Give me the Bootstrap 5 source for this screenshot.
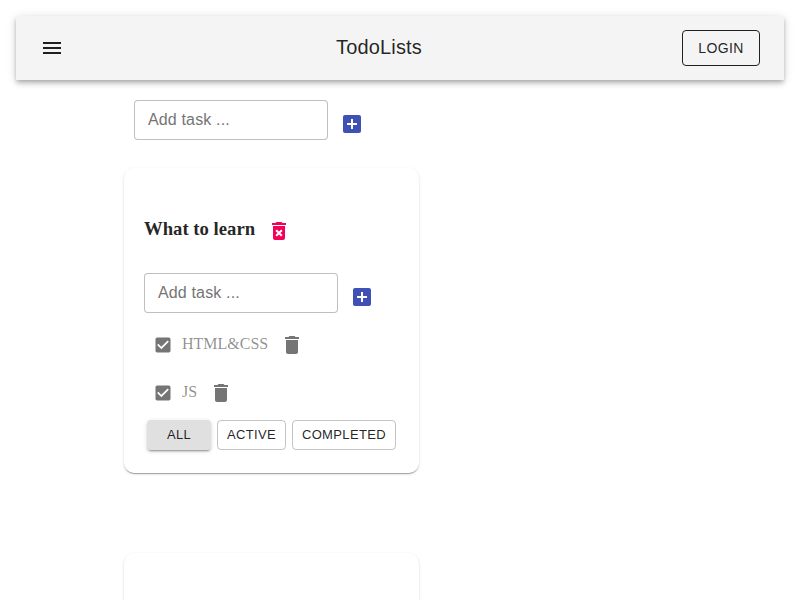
<!DOCTYPE html>
<html lang="en">
<head>
<meta charset="utf-8">
<meta name="viewport" content="width=device-width, initial-scale=1">
<title>TodoLists</title>
<link href="https://cdn.jsdelivr.net/npm/bootstrap@5.3.0/dist/css/bootstrap.min.css" rel="stylesheet">
<style>
body { font-family: "Liberation Serif", "Times New Roman", serif; color: rgba(0,0,0,.87); background: #fff; height: 600px; overflow: hidden; padding: 16px 16px 0; }
.sans, .btn, .form-control { font-family: "Liberation Sans", Helvetica, Arial, sans-serif; }
svg { display: block; width: 24px; height: 24px; fill: currentColor; flex: none; }
.topbar { height: 64px; padding: 0 24px; background: #f4f4f4; box-shadow: 0 2px 4px -1px rgba(0,0,0,.2), 0 4px 5px rgba(0,0,0,.14), 0 1px 10px rgba(0,0,0,.12); }
.title { font-size: 20px; line-height: 30px; letter-spacing: .15px; font-weight: 400; padding: 0 0 2px 12px; }
.btn { --bs-btn-padding-x: 0; --bs-btn-padding-y: 0; --bs-btn-color: rgba(0,0,0,.87); --bs-btn-border-radius: 4px; --bs-btn-line-height: 1; display: flex; align-items: center; justify-content: center; }
.login { width: 78px; height: 36px; font-size: 14px; letter-spacing: .4px; border-color: #212121; }
.filter { height: 30px; padding-bottom: 2px; font-size: 13px; letter-spacing: .37px; border-color: rgba(0,0,0,.23); }
.filter-all { width: 64px; background: #e0e0e0; border: 0; box-shadow: 0 3px 1px -2px rgba(0,0,0,.2), 0 2px 2px rgba(0,0,0,.14), 0 1px 5px rgba(0,0,0,.12); }
.filter-active { width: 69px; }
.filter-done { width: 104px; }
.page { height: 520px; overflow: hidden; padding: 20px 0 0 108px; }
.task-input { width: 194px; height: 40px; padding: 0 13px; font-size: 16px; letter-spacing: .15px; border: 1px solid rgba(0,0,0,.25); border-radius: 4px; }
.task-input::placeholder { color: #757575; opacity: 1; }
.add { color: #3f51b5; margin: 8px 0 0 12px; }
.new-list { height: 40px; margin: 0 0 28px 10px; }
.list-panel { width: 295px; height: 305px; padding: 20px; margin-bottom: 80px; background: #fff; border-radius: 10px; box-shadow: 0 2px 1px -1px rgba(0,0,0,.2), 0 1px 1px rgba(0,0,0,.14), 0 1px 3px rgba(0,0,0,.12); }
.list-panel:last-child { height: 47px; margin-bottom: 0; padding: 0; border-radius: 10px 10px 0 0; }
.list-head { height: 85px; padding-top: 30px; }
.list-title { font-size: 18.72px; line-height: 22px; font-weight: 700; }
.remove-list { color: #f50057; margin: 1px 0 0 12px; }
.tasks { padding-top: 8px; }
.task-row { height: 48px; padding-left: 9px; color: #757575; }
.task-row .tick { width: 20px; height: 20px; }
.task-row span { margin: 0 12px 0 9px; padding-bottom: 2px; font-size: 16px; line-height: 20px; color: rgba(0,0,0,.45); }
.filters { gap: 6px; padding: 3px 0 0 3px; }
</style>
</head>
<body>
<svg class="d-none">
<symbol id="add-box" viewBox="0 0 24 24"><path d="M19 3H5c-1.110 0-2 .9-2 2v14c0 1.100.89 2 2 2h14c1.100 0 2-.9 2-2V5c0-1.100-.9-2-2-2zm-2 10h-4v4h-2v-4H7v-2h4V7h2v4h4v2z"/></symbol>
<symbol id="trash" viewBox="0 0 24 24"><path d="M6 19c0 1.100.9 2 2 2h8c1.100 0 2-.9 2-2V7H6v12zM19 4h-3.500l-1-1h-5l-1 1H5v2h14V4z"/></symbol>
<symbol id="checked" viewBox="0 0 24 24"><path d="M19 3H5c-1.110 0-2 .9-2 2v14c0 1.100.89 2 2 2h14c1.110 0 2-.9 2-2V5c0-1.100-.89-2-2-2zm-9 14l-5-5 1.410-1.410L10 14.170l7.590-7.590L19 8l-9 9z"/></symbol>
</svg>
<header class="topbar d-flex align-items-center justify-content-between">
  <svg viewBox="0 0 24 24"><path d="M3 18h18v-2H3v2zm0-5h18v-2H3v2zm0-7v2h18V6H3z"/></svg>
  <h6 class="title sans mb-0">TodoLists</h6>
  <button class="btn login">LOGIN</button>
</header>
<main class="page">
  <div class="new-list d-flex align-items-center">
    <input class="form-control task-input" placeholder="Add task ...">
    <svg class="add"><use href="#add-box"/></svg>
  </div>
  <section class="list-panel">
    <div class="list-head d-flex">
      <h3 class="list-title mb-0">What to learn</h3>
      <svg class="remove-list" viewBox="0 0 24 24"><path d="M6 19c0 1.100.9 2 2 2h8c1.100 0 2-.9 2-2V7H6v12zm2.460-7.120l1.410-1.410L12 12.590l2.120-2.120 1.410 1.410L13.410 14l2.120 2.120-1.410 1.410L12 15.410l-2.120 2.120-1.410-1.410L10.590 14l-2.130-2.120zM15.500 4l-1-1h-5l-1 1H5v2h14V4z"/></svg>
    </div>
    <div class="d-flex align-items-center">
      <input class="form-control task-input" placeholder="Add task ...">
      <svg class="add"><use href="#add-box"/></svg>
    </div>
    <div class="tasks">
      <div class="task-row d-flex align-items-center"><svg class="tick"><use href="#checked"/></svg><span>HTML&amp;CSS</span><svg><use href="#trash"/></svg></div>
      <div class="task-row d-flex align-items-center"><svg class="tick"><use href="#checked"/></svg><span>JS</span><svg><use href="#trash"/></svg></div>
    </div>
    <div class="filters d-flex">
      <button class="btn filter filter-all">ALL</button>
      <button class="btn filter filter-active">ACTIVE</button>
      <button class="btn filter filter-done">COMPLETED</button>
    </div>
  </section>
  <section class="list-panel"></section>
</main>
<script src="https://cdn.jsdelivr.net/npm/bootstrap@5.3.0/dist/js/bootstrap.bundle.min.js"></script>
</body>
</html>
